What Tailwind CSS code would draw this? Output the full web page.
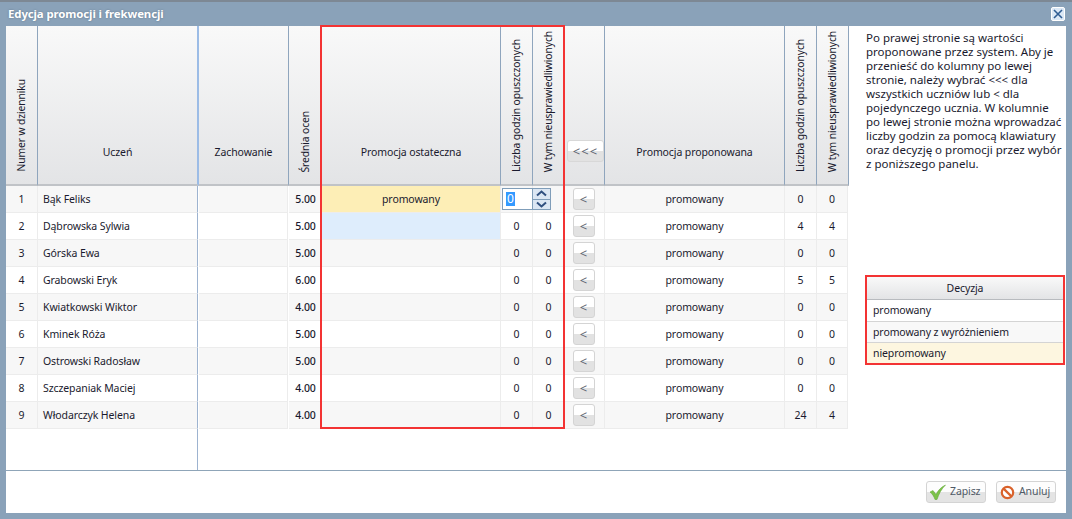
<!DOCTYPE html>
<html lang="pl">
<head>
    <meta charset="UTF-8">
    <title>Edycja promocji i frekwencji</title>
    <script src="https://cdn.jsdelivr.net/npm/@tailwindcss/browser@4"></script>
</head>
<body class="overflow-hidden bg-white">
    <div class="relative flex flex-col w-[1072px] h-[519px] bg-[#8aa2b9] border-t-2 border-[#7d8894] font-['Noto_Sans','DejaVu_Sans',sans-serif] text-[10.5px] tracking-[-0.1px] text-[#1a1a2e]">
        <!-- title bar -->
        <div class="flex items-center justify-between h-[24px] pl-[8px] pr-[7px] shrink-0">
            <span class="-mt-[1px] font-bold text-[11.4px] text-white [text-shadow:0_0_2px_#5d7388]">Edycja promocji i frekwencji</span>
            <button class="flex items-center justify-center w-[14px] h-[14px] bg-[#dbe8f6] border border-white rounded-[2px]">
                <svg width="10" height="10" viewBox="0 0 10 10"><path d="M1 1L9 9M9 1L1 9" stroke="#2f5d93" stroke-width="1.6"/></svg>
            </button>
        </div>

        <div class="flex flex-col mx-[6px] h-[487px] bg-white">
            <div class="flex h-[444px]">
                <!-- table -->
                <div class="relative flex flex-col w-[843px]">
                    <div id="grid" class="grid grid-cols-[32px_161px_90px_33px_179px_32px_32px_40px_180px_32px_32px] grid-rows-[160px] auto-rows-[27px]">
                        <div class="flex items-end justify-center pb-[12px] bg-gradient-to-b from-[#f9f9f9] to-[#e3e4e6] border-r border-b-2 border-r-[#8fa5bd] border-b-[#c0c3c7]"><span class="[writing-mode:vertical-rl] rotate-180 text-[10.3px]">Numer w dzienniku</span></div>
                        <div class="flex items-end justify-center pb-[23px] bg-gradient-to-b from-[#f9f9f9] to-[#e3e4e6] border-r-2 border-b-2 border-r-[#9cbce6] border-b-[#c0c3c7]">Uczeń</div>
                        <div class="flex items-end justify-center pb-[23px] bg-gradient-to-b from-[#f9f9f9] to-[#e3e4e6] border-r border-b-2 border-r-[#8fa5bd] border-b-[#c0c3c7]">Zachowanie</div>
                        <div class="flex items-end justify-center pb-[12px] bg-gradient-to-b from-[#f9f9f9] to-[#e3e4e6] border-b-2 border-b-[#c0c3c7]"><span class="[writing-mode:vertical-rl] rotate-180 text-[10.3px]">Średnia ocen</span></div>
                        <div class="flex items-end justify-center pb-[23px] bg-gradient-to-b from-[#f9f9f9] to-[#e3e4e6] border-r border-b-2 border-r-[#8fa5bd] border-b-[#c0c3c7]">Promocja ostateczna</div>
                        <div class="flex items-end justify-center pb-[12px] bg-gradient-to-b from-[#f9f9f9] to-[#e3e4e6] border-r border-b-2 border-r-[#8fa5bd] border-b-[#c0c3c7]"><span class="[writing-mode:vertical-rl] rotate-180 text-[10.3px]">Liczba godzin opuszczonych</span></div>
                        <div class="flex items-end justify-center pb-[12px] bg-gradient-to-b from-[#f9f9f9] to-[#e3e4e6] border-r border-b-2 border-r-[#8fa5bd] border-b-[#c0c3c7]"><span class="[writing-mode:vertical-rl] rotate-180 whitespace-nowrap text-[10.3px]">W tym nieusprawiedliwionych</span></div>
                        <div class="flex items-end justify-end pb-[22px] bg-gradient-to-b from-[#f9f9f9] to-[#e3e4e6] border-r border-b-2 border-r-[#8fa5bd] border-b-[#c0c3c7]">
                            <button class="w-[37px] h-[22px] rounded-[3px] border border-[#d8d8d8] bg-[linear-gradient(#fff_50%,#e2e2e2_50%)] text-[13px] text-[#5d6570] tracking-[1px] leading-none">&lt;&lt;&lt;</button>
                        </div>
                        <div class="flex items-end justify-center pb-[23px] bg-gradient-to-b from-[#f9f9f9] to-[#e3e4e6] border-r border-b-2 border-r-[#8fa5bd] border-b-[#c0c3c7]">Promocja proponowana</div>
                        <div class="flex items-end justify-center pb-[12px] bg-gradient-to-b from-[#f9f9f9] to-[#e3e4e6] border-r border-b-2 border-r-[#8fa5bd] border-b-[#c0c3c7]"><span class="[writing-mode:vertical-rl] rotate-180 text-[10.3px]">Liczba godzin opuszczonych</span></div>
                        <div class="flex items-end justify-center pb-[12px] bg-gradient-to-b from-[#f9f9f9] to-[#e3e4e6] border-r border-b-2 border-r-[#8fa5bd] border-b-[#c0c3c7]"><span class="[writing-mode:vertical-rl] rotate-180 whitespace-nowrap text-[10.3px]">W tym nieusprawiedliwionych</span></div>
                    </div>
                    <div class="flex-1">
                        <div class="w-[192px] h-full border-r border-[#9db3d0]"></div>
                    </div>
                    <!-- red frame over the final promotion columns -->
                    <div class="absolute left-[314px] top-[-1px] w-[245px] h-[404px] border-2 border-[#f33333] pointer-events-none"></div>
                </div>

                <!-- side panel -->
                <div class="flex flex-col flex-1 pl-[16px] pr-[1px]">
                    <p class="h-[249px] pt-[5px] pl-[1px] text-[11.5px] tracking-normal leading-[14px] whitespace-nowrap">Po prawej stronie są wartości<br>proponowane przez system. Aby je<br>przenieść do kolumny po lewej<br>stronie, należy wybrać &lt;&lt;&lt; dla<br>wszystkich uczniów lub &lt; dla<br>pojedynczego ucznia. W kolumnie<br>po lewej stronie można wprowadzać<br>liczby godzin za pomocą klawiatury<br>oraz decyzję o promocji przez wybór<br>z poniższego panelu.</p>
                    <div class="flex flex-col w-[200px] h-[90px] border-2 border-[#f33333]">
                        <div class="flex items-center justify-center h-[23px] pt-[1px] bg-gradient-to-b from-[#f9f9f9] to-[#e3e4e6] border-b border-[#b8bbbf]">Decyzja</div>
                        <div class="flex items-center h-[22px] pt-[1px] px-[6px] border-b border-[#d4d4d4]">promowany</div>
                        <div class="flex items-center h-[21px] pt-[1px] px-[6px] bg-[#f8f8f8] border-b border-[#d4d4d4]">promowany z wyróżnieniem</div>
                        <div class="flex items-center flex-1 pt-[1px] px-[6px] bg-[#fdf6e0]">niepromowany</div>
                    </div>
                </div>
            </div>

            <!-- footer -->
            <div class="flex items-start justify-end gap-[10px] flex-1 pt-[10px] pr-[10px] border-t border-[#8fa5b8]">
                <button class="flex items-center gap-[3px] w-[60px] h-[22px] pl-[2px] rounded-[3px] border border-[#d4d4d4] bg-[linear-gradient(#fdfdfd_50%,#e4e4e4_50%)] text-[#4f5a66]">
                    <svg width="18" height="16" viewBox="0 0 18 16"><path d="M1 8L4 6.5L7 10.5C9 6.5 12 3 16.5 1C12.5 5 10 9.5 8 15.5H6C5 12.5 3.5 10 1 8Z" fill="#7cc24a" stroke="#5ba32f" stroke-width=".5"/></svg>
                    Zapisz
                </button>
                <button class="flex items-center gap-[4px] w-[60px] h-[22px] pl-[3px] rounded-[3px] border border-[#d4d4d4] bg-[linear-gradient(#fdfdfd_50%,#e4e4e4_50%)] text-[#4f5a66]">
                    <svg width="15" height="15" viewBox="0 0 15 15"><circle cx="7.5" cy="7.5" r="5.7" fill="#fff" stroke="#d9622b" stroke-width="2.2"/><path d="M3.6 3.6L11.4 11.4" stroke="#d9622b" stroke-width="2.2"/></svg>
                    Anuluj
                </button>
            </div>
        </div>
    </div>

    <script>
        const rows = [
            ['Bąk Feliks', '5.00', 0, 0],
            ['Dąbrowska Sylwia', '5.00', 4, 4],
            ['Górska Ewa', '5.00', 0, 0],
            ['Grabowski Eryk', '6.00', 5, 5],
            ['Kwiatkowski Wiktor', '4.00', 0, 0],
            ['Kminek Róża', '5.00', 0, 0],
            ['Ostrowski Radosław', '5.00', 0, 0],
            ['Szczepaniak Maciej', '4.00', 0, 0],
            ['Włodarczyk Helena', '4.00', 24, 4],
        ];
        const spinner = `<div class="absolute left-[1px] top-[2px] z-10 flex w-[49px] h-[22px] bg-white border border-[#7f9db9]">
            <div class="flex items-center flex-1 pl-[3px] border-r border-[#7f9db9]"><span class="px-[1px] bg-[#3399ff] text-white text-[12px] leading-[14px]">0</span></div>
            <div class="flex flex-col w-[17px]">
                <div class="flex items-center justify-center flex-1 bg-[#dbe6f3] border-b border-[#7f9db9]"><svg width="11" height="7" viewBox="0 0 11 7"><path d="M1 5.5L5.5 1.5L10 5.5" fill="none" stroke="#2f4f7f" stroke-width="2"/></svg></div>
                <div class="flex items-center justify-center flex-1 bg-[#dbe6f3]"><svg width="11" height="7" viewBox="0 0 11 7"><path d="M1 1.5L5.5 5.5L10 1.5" fill="none" stroke="#2f4f7f" stroke-width="2"/></svg></div>
            </div>
        </div>`;
        const backBtn = `<button class="w-[22px] h-[22px] mr-[2px] -mt-[1px] rounded-[3px] border border-[#d4d4d4] bg-[linear-gradient(#fff_50%,#e2e2e2_50%)] text-[13px] text-[#5d6570] leading-none">&lt;</button>`;

        let html = '';
        rows.forEach((r, i) => {
            const bg = i % 2 === 0 ? 'bg-[#f7f7f7]' : 'bg-white';
            const cell = `flex items-center justify-center pt-[1px] border-r border-b border-[#ececec] ${bg}`;
            let finalBg = bg;
            if (i === 0) finalBg = 'bg-[#fdeeb6]';
            if (i === 1) finalBg = 'bg-[#deedfc]';
            html += `<div class="${cell}">${i + 1}</div>`;
            html += `<div class="flex items-center pt-[1px] pl-[5px] mr-[1px] border-r border-b border-r-[#9db3d0] border-b-[#ececec] ${bg}">${r[0]}</div>`;
            html += `<div class="mr-[1px] border-r border-b border-[#ececec] ${bg}"></div>`;
            html += `<div class="flex items-center justify-center pt-[1px] border-b border-[#ececec] ${bg} font-medium">${r[1]}</div>`;
            html += `<div class="flex items-center justify-center pt-[1px] border-r border-b border-[#ececec] ${finalBg}">${i === 0 ? 'promowany' : ''}</div>`;
            html += `<div class="relative ${cell}">${i === 0 ? spinner : '0'}</div>`;
            html += `<div class="${cell}">${i === 0 ? '' : '0'}</div>`;
            html += `<div class="${cell}">${backBtn}</div>`;
            html += `<div class="${cell}">promowany</div>`;
            html += `<div class="${cell}">${r[2]}</div>`;
            html += `<div class="${cell} mr-[1px]">${r[3]}</div>`;
        });
        document.getElementById('grid').insertAdjacentHTML('beforeend', html);
    </script>
</body>
</html>
